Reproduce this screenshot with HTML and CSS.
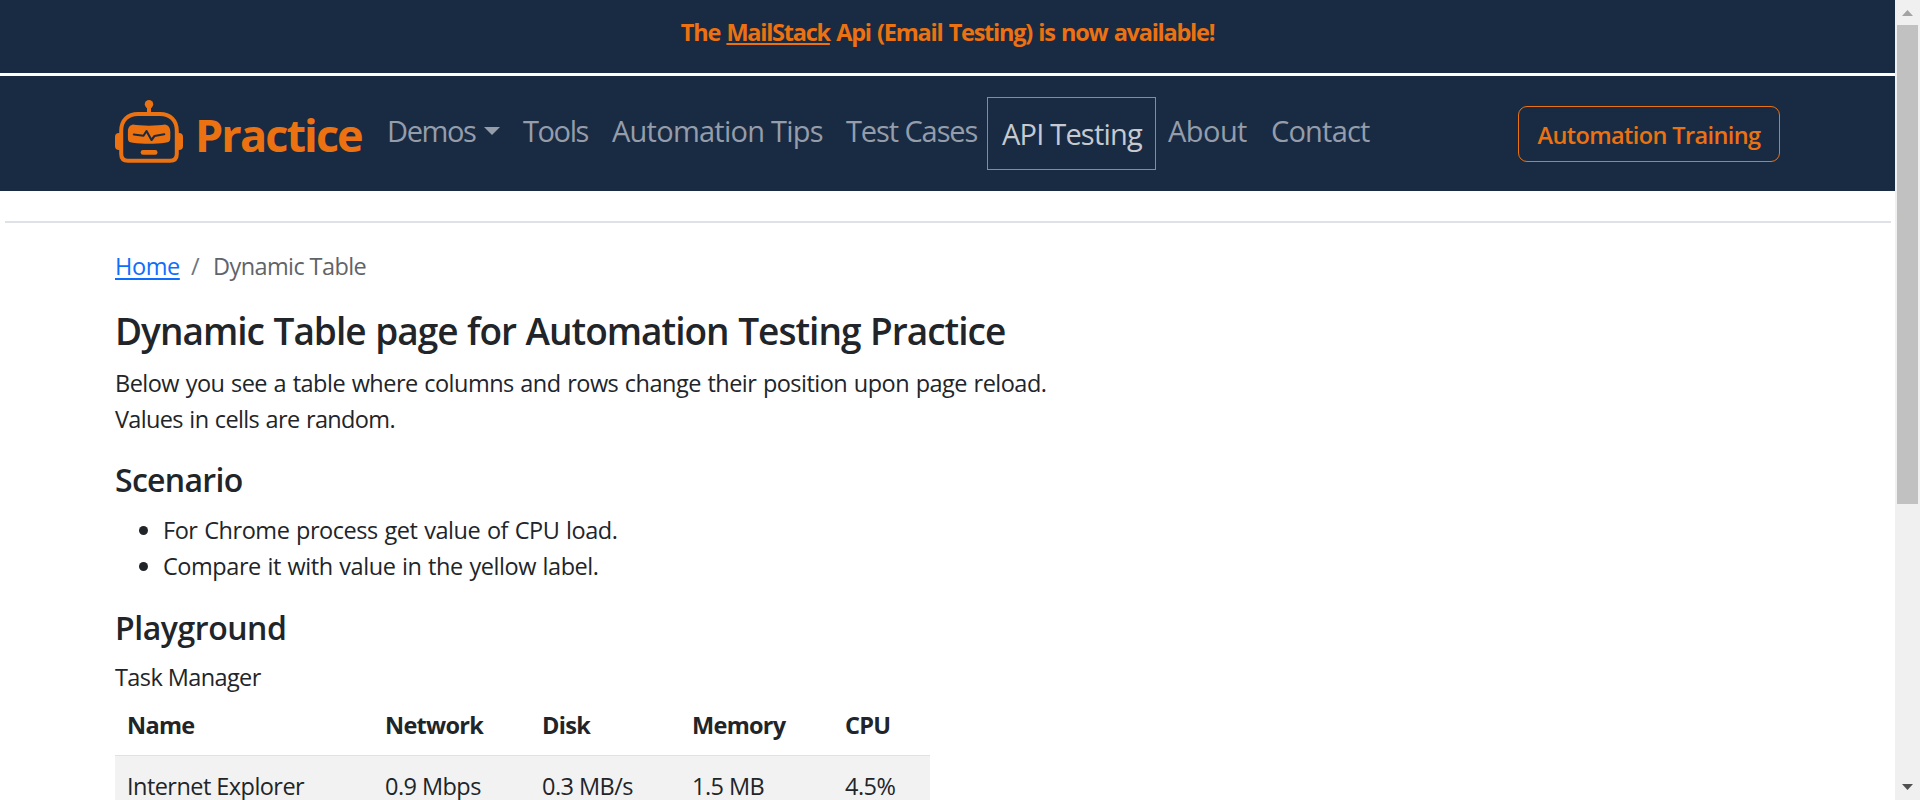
FILE: index.html
```html
<!DOCTYPE html>
<html lang="en">
<head>
<meta charset="utf-8">
<title>Dynamic Table</title>
<link rel="stylesheet" href="styles.css">
</head>
<body>
<div class="window">
  <div class="page">
    <div class="announcement"><span class="announcement-text">The <a class="announcement-link" href="#">MailStack</a> Api (Email Testing) is now available!</span></div>
    <header class="navbar">
      <a class="brand" href="#">
        <svg class="brand-icon" viewBox="0 0 68 63" width="68" height="63" aria-hidden="true">
          <g fill="#ec7211">
            <circle cx="34" cy="4.3" r="4.2"/>
            <rect x="32" y="6" width="4" height="8"/>
            <path d="M5 33h-1a4 4 0 0 0-4 4v9a4 4 0 0 0 4 4h1zM63 33h1a4 4 0 0 1 4 4v9a4 4 0 0 1-4 4h-1z"/>
            <path d="M18 24.5C25 26 43 26 50 24.5C54 25.500 55.300 28 55.300 32V37.500C55.300 41.500 54 42.300 50 42.800C40 44.200 28 44.200 18 42.800C14 42.300 12.900 41.500 12.900 37.500V32C12.900 28 14 25.500 18 24.500z"/>
            <rect x="25.700" y="50" width="16.800" height="4.700" rx="2.300"/>
          </g>
          <path d="M6.200 31C6.200 20 13 14 23 14H45C55 14 61.800 20 61.800 31V54C61.800 58.500 59.500 60.700 55 60.700H13C8.500 60.700 6.200 58.500 6.200 54z" fill="none" stroke="#ec7211" stroke-width="4"/>
          <path d="M18.800 34.500L28.500 35.700L31.500 31L36.500 40L39.500 36L49.300 34.300" fill="none" stroke="#192b43" stroke-width="2.100" stroke-linecap="round" stroke-linejoin="round"/>
        </svg>
        <span class="brand-name">Practice</span>
      </a>
      <nav class="nav">
        <a class="nav-link demos" href="#">Demos<span class="caret"></span></a>
        <a class="nav-link tools" href="#">Tools</a>
        <a class="nav-link tips" href="#">Automation Tips</a>
        <a class="nav-link cases" href="#">Test Cases</a>
        <a class="nav-link api" href="#">API Testing</a>
        <a class="nav-link about" href="#">About</a>
        <a class="nav-link contact" href="#">Contact</a>
      </nav>
      <a class="training" href="#">Automation Training</a>
    </header>
    <hr class="rule">
    <main class="content">
      <nav class="breadcrumb"><a class="crumb-home" href="#">Home</a><span class="crumb-sep">/</span><span class="crumb-current">Dynamic Table</span></nav>
      <h1 class="title">Dynamic Table page for Automation Testing Practice</h1>
      <p class="intro">Below you see a table where columns and rows change their position upon page reload.<br><span class="intro-second">Values in cells are random.</span></p>
      <h2 class="section scenario">Scenario</h2>
      <ul class="steps">
        <li class="step">For Chrome process get value of CPU load.</li>
        <li class="step">Compare it with value in the yellow label.</li>
      </ul>
      <h2 class="section playground">Playground</h2>
      <p class="caption">Task Manager</p>
      <table class="tasks">
        <colgroup><col class="col-name"><col class="col-network"><col class="col-disk"><col class="col-memory"><col class="col-cpu"></colgroup>
        <thead><tr><th>Name</th><th>Network</th><th>Disk</th><th>Memory</th><th>CPU</th></tr></thead>
        <tbody><tr><td>Internet Explorer</td><td>0.9 Mbps</td><td>0.3 MB/s</td><td>1.5 MB</td><td>4.5%</td></tr></tbody>
      </table>
    </main>
  </div>
  <div class="scrollbar">
    <svg class="arrow" viewBox="0 0 11 6" width="11" height="6"><path d="M0 6L5.500 0L11 6z" fill="#a3a3a3"/></svg>
    <div class="thumb"></div>
    <svg class="arrow arrow-down" viewBox="0 0 11 6" width="11" height="6"><path d="M0 0L5.500 6L11 0z" fill="#505050"/></svg>
  </div>
</div>
</body>
</html>
```
FILE: styles.css
```css
* { box-sizing: border-box; }
body {
  margin: 0;
  overflow: hidden;
  background: #fff;
  color: #212529;
  font-family: "Open Sans", "Noto Sans", sans-serif;
  font-size: 23.500px;
  line-height: 36px;
}
a { color: inherit; text-decoration: none; }
.window { display: flex; height: 800px; overflow: hidden; }
.page { width: 1895px; flex: none; }

.announcement {
  height: 76px;
  padding-top: 14px;
  background: #192b43;
  border-bottom: 3px solid #fff;
  color: #ec7211;
  text-align: center;
  font-weight: 700;
  white-space: nowrap;
}
.announcement-text { letter-spacing: -1.250px; word-spacing: 1.500px; }
.announcement-link { text-decoration: underline; text-decoration-thickness: 2px; text-underline-offset: 2px; }

.navbar {
  display: flex;
  align-items: flex-start;
  height: 115px;
  padding: 21px 115px 0;
  background: #192b43;
  white-space: nowrap;
}
.brand { display: flex; width: 260px; padding-top: 3px; color: #ec7211; }
.brand-icon { flex: none; margin-right: 12px; }
.brand-name { padding-top: 2px; font-size: 45px; font-weight: 700; line-height: 66px; letter-spacing: -1.900px; }
.nav { display: flex; color: #959daa; font-size: 29px; line-height: 45px; }
.nav-link { padding: 11px 0 0 12px; }
.demos { width: 136px; letter-spacing: -1.400px; }
.tools { width: 89px; letter-spacing: -1.400px; }
.tips { width: 234px; letter-spacing: -0.750px; }
.cases { width: 153px; letter-spacing: -1.100px; }
.api { width: 169px; height: 73px; padding: 13px 0 0 14px; border: 1px solid #ec7211; color: #c6cad0; letter-spacing: -0.800px; }
.about { width: 103px; letter-spacing: -0.550px; }
.contact { width: 122px; letter-spacing: -0.800px; }
.caret {
  display: inline-block;
  margin-left: 9px;
  vertical-align: 7px;
  border: 8px solid transparent;
  border-top-color: #959daa;
  border-bottom: 0;
}
.training {
  width: 262px;
  height: 56px;
  margin: 9px 0 0 auto;
  border: 1px solid #ec7211;
  border-radius: 9px;
  color: #ec7211;
  font-weight: 600;
  line-height: 56px;
  text-align: center;
  letter-spacing: -0.600px;
}

.rule { height: 2px; margin: 30px 4px 0 5px; border: 0; background: #dee2e6; }
.content { padding: 25px 115px 0; white-space: nowrap; }
.breadcrumb { display: flex; color: #6c757d; letter-spacing: -0.600px; }
.crumb-home { width: 64px; color: #0d6efd; letter-spacing: -0.400px; text-decoration: underline; text-decoration-thickness: 2px; text-underline-offset: 3px; }
.crumb-sep { padding: 0 14px 0 12px; }
.crumb-current { color: #5f6469; }
.title { margin: 24px 0 0; font-size: 37px; font-weight: 600; line-height: 46px; letter-spacing: -1px; word-spacing: 1px; }
.intro { margin: 11px 0 0; letter-spacing: -0.520px; word-spacing: 1px; }
.intro-second { letter-spacing: -0.650px; }
.section { margin: 0; font-size: 32px; font-weight: 600; line-height: 40px; letter-spacing: -0.700px; }
.scenario { padding-top: 23px; }
.steps { margin: 12px 0 0; padding: 0; list-style: none; letter-spacing: -0.450px; word-spacing: 1px; }
.step { display: flex; align-items: center; }
.step::before { content: ""; width: 9px; height: 9px; margin: 0 15px 0 24px; border-radius: 50%; background: #212529; }
.playground { padding-top: 24px; letter-spacing: -0.450px; }
.caption { margin: 11px 0 0; letter-spacing: -0.600px; }
.tasks { width: 815px; table-layout: fixed; border-collapse: collapse; }
.tasks th, .tasks td { padding: 12px 0 12px 12px; text-align: left; letter-spacing: -0.550px; }
.tasks th { font-weight: 700; border-bottom: 1px solid #dee2e6; letter-spacing: -0.700px; }
.tasks td { background: #f2f2f2; }
.col-name { width: 258px; }
.col-network { width: 157px; }
.col-disk { width: 150px; }
.col-memory { width: 153px; }
.col-cpu { width: 97px; }

.scrollbar { display: flex; flex-direction: column; align-items: center; width: 25px; padding: 10px 0; background: #f0f0f0; }
.arrow { flex: none; }
.thumb { flex: none; width: 21px; height: 479px; margin-top: 9px; background: #c1c1c1; }
.arrow-down { margin-top: auto; }
```
